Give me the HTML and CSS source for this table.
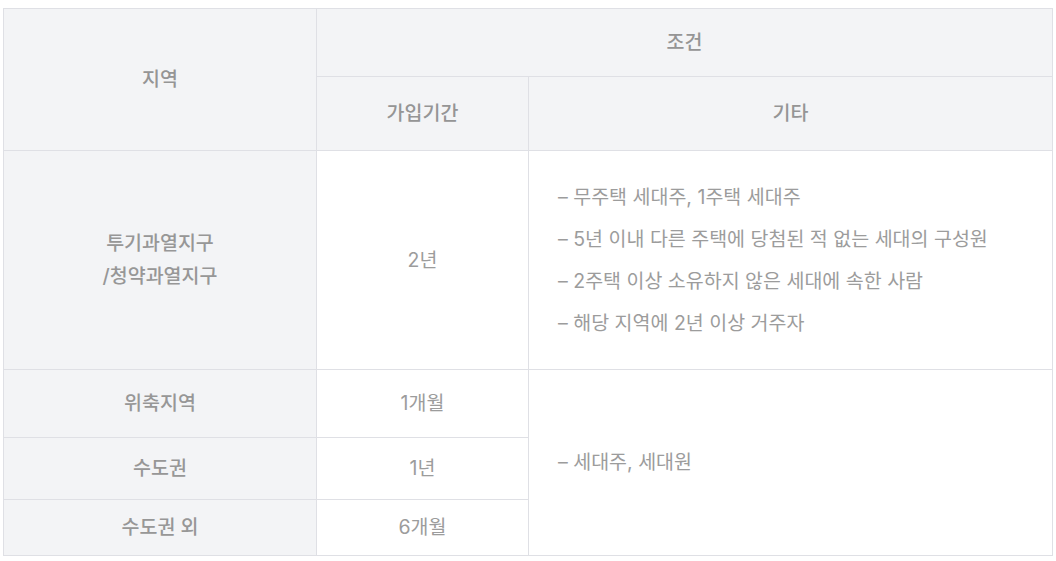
FILE: index.html
```html
<!DOCTYPE html>
<html lang="ko">
<head>
<meta charset="utf-8">
<title>청약 조건</title>
<link rel="stylesheet" href="styles.css">
</head>
<body>
<div class="table">
  <div class="cell head region">지역</div>
  <div class="cell head cond">조건</div>
  <div class="cell head">가입기간</div>
  <div class="cell head">기타</div>

  <div class="cell side r3">투기과열지구<br>/청약과열지구</div>
  <div class="cell body r3">2년</div>
  <div class="cell body r3 etc">
    <ul class="list">
      <li>– 무주택 세대주, 1주택 세대주</li>
      <li>– 5년 이내 다른 주택에 당첨된 적 없는 세대의 구성원</li>
      <li>– 2주택 이상 소유하지 않은 세대에 속한 사람</li>
      <li>– 해당 지역에 2년 이상 거주자</li>
    </ul>
  </div>

  <div class="cell side">위축지역</div>
  <div class="cell body">1개월</div>
  <div class="cell body etc span3">
    <ul class="list">
      <li>– 세대주, 세대원</li>
    </ul>
  </div>

  <div class="cell side">수도권</div>
  <div class="cell body">1년</div>

  <div class="cell side">수도권 외</div>
  <div class="cell body">6개월</div>
</div>
</body>
</html>
```

FILE: styles.css
```css
html, body {
  margin: 0;
  padding: 0;
  background: #ffffff;
}

body {
  padding: 8px 0 0 3px;
  font-family: Inter, "Noto Sans CJK KR", "Noto Sans", sans-serif;
  font-size: 19.5px;
  color: #9a9a9a;
}

.table {
  width: 1050px;
  display: grid;
  grid-template-columns: 312px 211px 523px;
  grid-template-rows: 67px 73px 218px 67px 61px 55px;
  gap: 1px;
  padding: 1px;
  box-sizing: border-box;
  background: #dfe0e5;
}

.cell {
  display: flex;
  align-items: center;
  justify-content: center;
  text-align: center;
  line-height: 27px;
  background: #ffffff;
}

.head {
  background: #f3f4f6;
  color: #959595;
  font-weight: 500;
}

.region {
  grid-row: 1 / span 2;
}

.cond {
  grid-column: 2 / span 2;
}

.side {
  background: #f3f4f6;
  color: #979797;
  font-weight: 500;
  line-height: 33px;
}

.body {
  color: #9c9c9c;
}

.etc {
  justify-content: flex-start;
  text-align: left;
  padding-left: 29px;
}

.span3 {
  grid-row: 4 / span 3;
  grid-column: 3;
}

.list {
  list-style: none;
  margin: 0;
  padding: 0;
  display: flex;
  flex-direction: column;
  gap: 15px;
}
```
